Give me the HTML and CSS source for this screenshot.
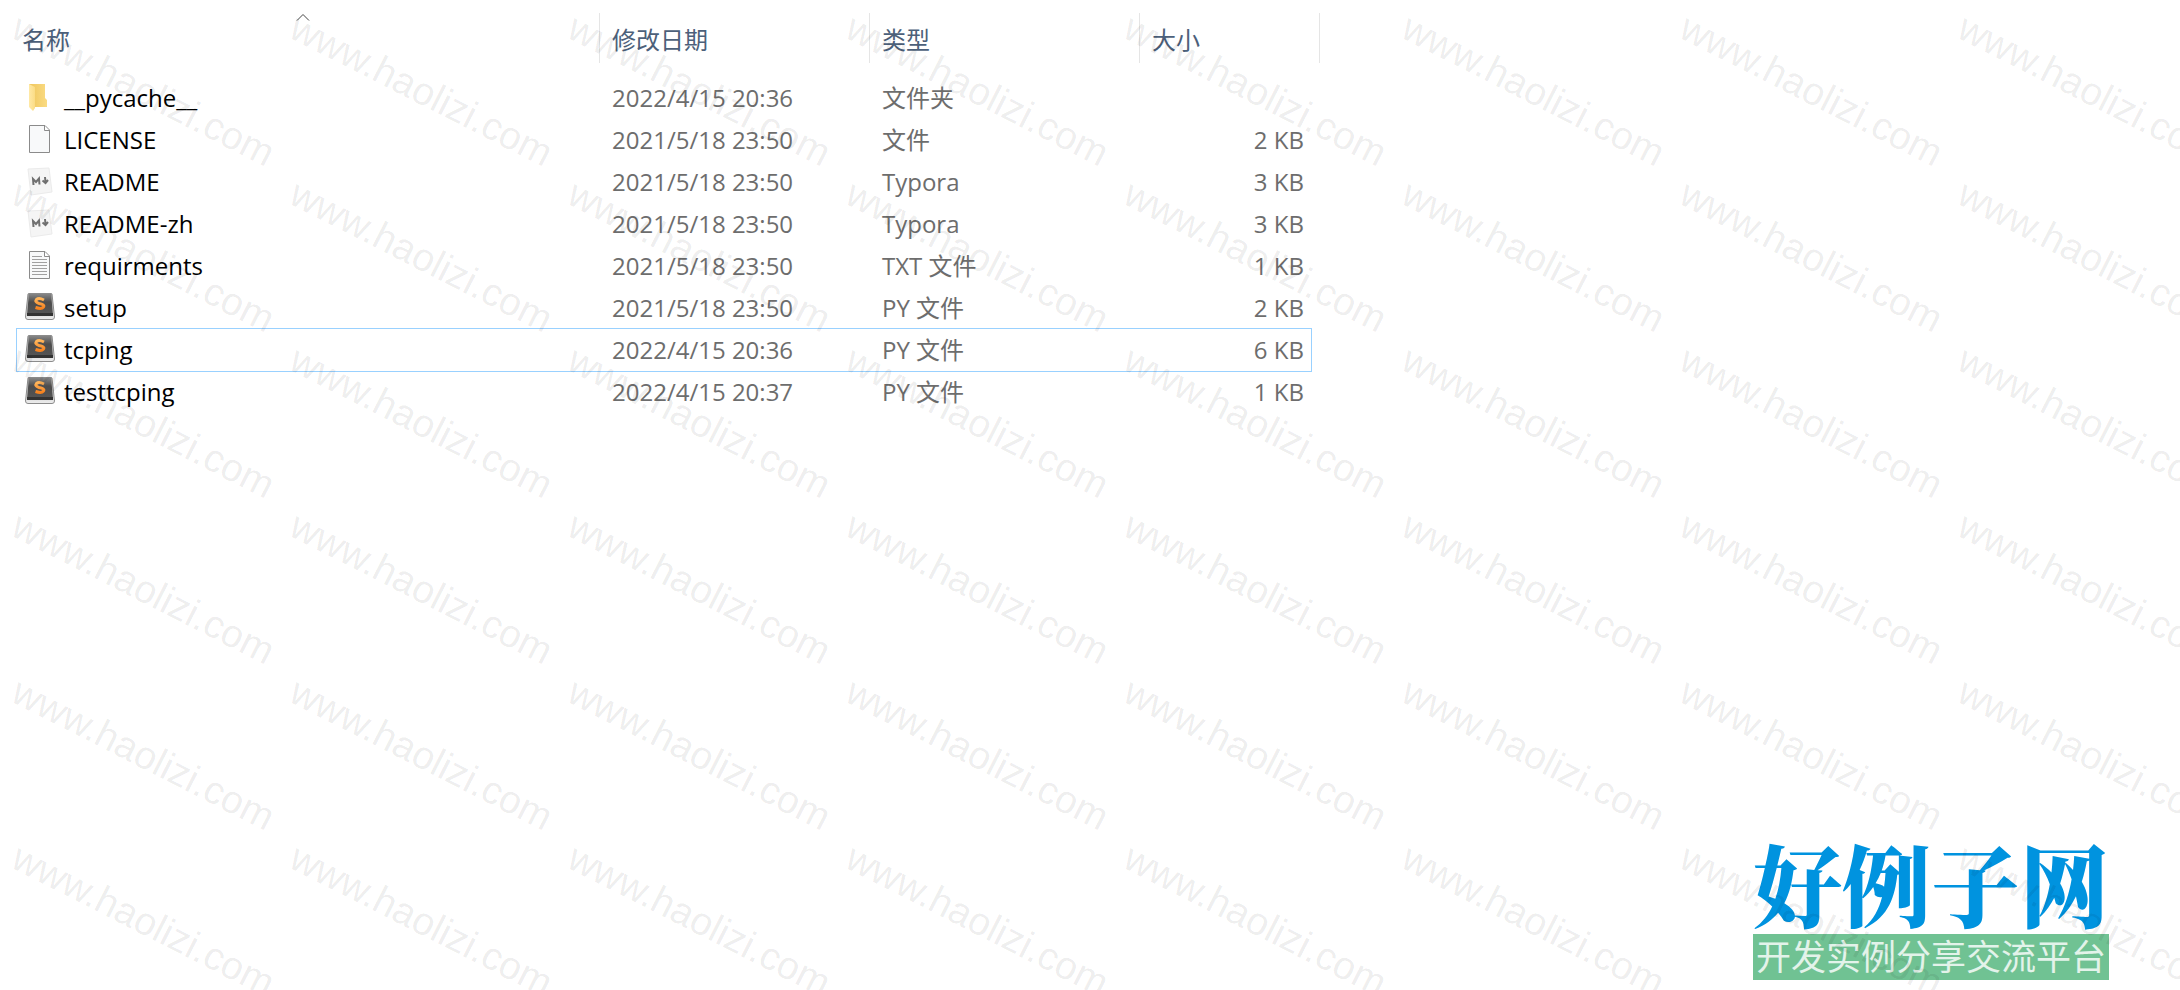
FILE: index.html
```html
<!DOCTYPE html>
<html lang="zh-CN">
<head>
    <meta charset="UTF-8">
    <title>tcping</title>
    <link rel="stylesheet" href="styles.css">
</head>
<body>
    <!-- 图标 -->
    <svg class="defs" aria-hidden="true">
        <defs>
            <linearGradient id="g_front" x1="0" x2="1"><stop offset="0" stop-color="#ffe9a6"/><stop offset="1" stop-color="#fbdc85"/></linearGradient>
            <linearGradient id="g_back" x1="0" x2="1"><stop offset="0" stop-color="#efc65c"/><stop offset="1" stop-color="#fadb83"/></linearGradient>
            <linearGradient id="g_key" x1="0" x2="0" y1="0" y2="1"><stop offset="0" stop-color="#8a8a8a"/><stop offset="0.4" stop-color="#4c4c4c"/><stop offset="1" stop-color="#555"/></linearGradient>
            <linearGradient id="g_base" x1="0" x2="0" y1="0" y2="1"><stop offset="0" stop-color="#999"/><stop offset="1" stop-color="#eee"/></linearGradient>
            <linearGradient id="g_s" x1="0" x2="0" y1="0" y2="1"><stop offset="0" stop-color="#ffb65c"/><stop offset="1" stop-color="#f5821f"/></linearGradient>
        </defs>
        <symbol id="i_folder" viewBox="0 0 30 30">
            <path d="M4 1H20V15L22 17V24H9Z" fill="url(#g_back)"/>
            <path d="M4 1L10 4V25L8 28L4 24Z" fill="url(#g_front)"/>
        </symbol>
        <symbol id="i_file" viewBox="0 0 30 30">
            <path d="M4.500 0.500H20L24.500 5V27.500H4.500Z" fill="#f8f9fa" stroke="#8b8b8b"/>
            <path d="M19.500 1V5.500H24" fill="#fff" stroke="#8b8b8b"/>
        </symbol>
        <symbol id="i_txt" viewBox="0 0 30 30">
            <use href="#i_file"/>
            <path d="M7 5.500H17M7 8.500H22M7 11.500H22M7 14.500H22M7 17.500H22M7 20.500H22M7 23.500H22" stroke="#a0a0a0"/>
        </symbol>
        <symbol id="i_md" viewBox="0 0 30 30">
            <path d="M3 2L24 1L27 25L6 28Z" fill="#f5f5f5" stroke="#ebebeb"/>
            <path d="M8.500 18L8 12L11 15L14 11.500L14.500 17.500" fill="none" stroke="#707070" stroke-width="2"/>
            <path d="M20 10L20.500 15M17.500 13.500L20.500 16L23 13" fill="none" stroke="#707070" stroke-width="2"/>
        </symbol>
        <symbol id="i_py" viewBox="0 0 30 30">
            <path d="M3 1Q3 0.500 4 0.500H26Q27 0.500 27 1L29.500 24Q29.500 26.500 27 26.500H3Q0.500 26.500 0.500 24Z" fill="url(#g_base)" stroke="#8c8c8c"/>
            <path d="M4 0.500H26L28 22H2Z" fill="url(#g_key)"/>
            <path d="M2 20H28V23H2Z" fill="#333"/>
            <path d="M19 7Q14 4.500 11.500 6.500Q9.500 9 14 10.500Q20 11.500 18.500 14Q16.500 16.500 10.500 14.500" fill="none" stroke="url(#g_s)" stroke-width="3"/>
        </symbol>
    </svg>

    <table class="list">
        <colgroup>
            <col class="l_name">
            <col class="l_date">
            <col class="l_type">
            <col class="l_size">
        </colgroup>
        <thead>
            <tr>
                <th aria-sort="ascending">
                    <button type="button">名称</button>
                    <svg class="l_sort" viewBox="0 0 14 8"><path d="M1 7.500L7 1.500L13 7.500" fill="none" stroke="#444"/></svg>
                </th>
                <th><button type="button">修改日期</button></th>
                <th><button type="button">类型</button></th>
                <th><button type="button">大小</button></th>
            </tr>
        </thead>
        <tbody>
            <tr><td><div class="l_file"><svg><use href="#i_folder"/></svg>__pycache__</div></td><td>2022/4/15 20:36</td><td>文件夹</td><td></td></tr>
            <tr><td><div class="l_file"><svg><use href="#i_file"/></svg>LICENSE</div></td><td>2021/5/18 23:50</td><td>文件</td><td>2 KB</td></tr>
            <tr><td><div class="l_file"><svg><use href="#i_md"/></svg>README</div></td><td>2021/5/18 23:50</td><td>Typora</td><td>3 KB</td></tr>
            <tr><td><div class="l_file"><svg><use href="#i_md"/></svg>README-zh</div></td><td>2021/5/18 23:50</td><td>Typora</td><td>3 KB</td></tr>
            <tr><td><div class="l_file"><svg><use href="#i_txt"/></svg>requirments</div></td><td>2021/5/18 23:50</td><td>TXT 文件</td><td>1 KB</td></tr>
            <tr><td><div class="l_file"><svg><use href="#i_py"/></svg>setup</div></td><td>2021/5/18 23:50</td><td>PY 文件</td><td>2 KB</td></tr>
            <tr class="on"><td><div class="l_file"><svg><use href="#i_py"/></svg>tcping</div></td><td>2022/4/15 20:36</td><td>PY 文件</td><td>6 KB</td></tr>
            <tr><td><div class="l_file"><svg><use href="#i_py"/></svg>testtcping</div></td><td>2022/4/15 20:37</td><td>PY 文件</td><td>1 KB</td></tr>
        </tbody>
    </table>

    <div class="logo">
        <div class="logo_name">好例子网</div>
        <div class="logo_sub">开发实例分享交流平台</div>
    </div>

    <div class="mark" aria-hidden="true"></div>

    <script>
        //水印铺满窗口
        const mark = document.querySelector(".mark");
        const cols = Math.ceil(window.innerWidth / 278);
        const rows = Math.ceil(window.innerHeight / 166);
        mark.style.setProperty("--cols", cols);
        for (let i = 0; i < cols * rows; i++) {
            const s = document.createElement("span");
            s.innerText = "www.haolizi.com";
            mark.appendChild(s);
        }
    </script>
</body>
</html>
```

FILE: styles.css
```css
body {
    margin: 0px;
    min-height: 100vh;
    position: relative;
    overflow: hidden;
    background-color: #fff;
    font-family: "Open Sans", "Noto Sans CJK SC", sans-serif;
    font-size: 24px;
    line-height: 32px;
    color: #6d6d6d;
}
.defs {
    position: absolute;
    width: 0px;
    height: 0px;
}
/* 文件列表 =============================== */
.list {
    width: 1294px;
    margin-left: 17px;
    table-layout: fixed;
    border-spacing: 0px;
}
.l_name { width: 582px; }
.l_date { width: 270px; }
.l_type { width: 270px; }
.list th {
    position: relative;
    padding: 13px 0px 14px;
}
.list th button {
    display: block;
    width: 100%;
    height: 50px;
    padding: 3px 0px 0px 12px;
    border: 0px;
    border-left: 1px solid #e5e5e5;
    background: none;
    font: inherit;
    font-weight: 400;
    color: #4c607a;
    text-align: left;
}
.list th:first-child button {
    padding-left: 5px;
    border-left: 0px;
}
.list th:last-child::after {
    content: "";
    position: absolute;
    top: 13px;
    right: -9px;
    height: 50px;
    border-right: 1px solid #e5e5e5;
}
.l_sort {
    position: absolute;
    top: 13px;
    left: 48%;
    width: 14px;
    height: 8px;
}
.list td {
    height: 42px;
    padding: 0px 0px 0px 13px;
    box-sizing: border-box;
    white-space: nowrap;
}
.list td:first-child {
    padding-left: 8px;
    color: #000;
}
.list td:last-child {
    padding-right: 7px;
    text-align: right;
}
.list .on {
    outline: 1px solid #99d1ff;
}
.l_file {
    display: flex;
    align-items: center;
    gap: 9px;
}
.l_file svg {
    width: 30px;
    height: 30px;
}
/* logo =============================== */
.logo {
    position: absolute;
    right: 71px;
    bottom: 10px;
    text-align: center;
    white-space: nowrap;
}
.logo_name {
    font-family: "Noto Serif CJK SC", "Noto Sans CJK SC", serif;
    font-size: 89px;
    font-weight: 900;
    line-height: 96px;
    padding-bottom: 4px;
    color: #0093df;
}
.logo_sub {
    background-color: #70c293;
    font-size: 35px;
    line-height: 46px;
    color: #e3f3ea;
}
/* 水印 =============================== */
.mark {
    position: absolute;
    inset: 0px;
    display: grid;
    grid-template-columns: repeat(var(--cols), 278px);
    grid-auto-rows: 166px;
    overflow: hidden;
    pointer-events: none;
}
.mark span {
    padding: 7px 0px 0px 24px;
    font-family: "Liberation Sans", sans-serif;
    font-size: 39px;
    line-height: 39px;
    color: rgba(0, 0, 0, 0.08);
    transform: rotate(27deg);
    transform-origin: 24px 7px;
}
```
